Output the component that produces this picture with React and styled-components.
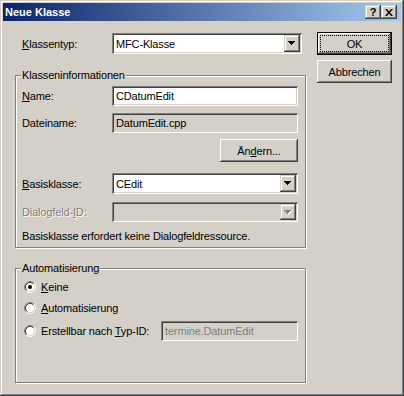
import React from "react";
import styled, { createGlobalStyle } from "styled-components";

const GlobalStyle = createGlobalStyle`
  html, body {
    margin: 0;
    padding: 0;
    background: #d4d0c8;
  }
  body {
    font-family: "Liberation Sans", Arial, sans-serif;
    font-size: 11px;
    letter-spacing: -0.15px;
    color: #000;
  }
`;

const raised =
  "inset -1px -1px 0 #404040, inset 1px 1px 0 #ffffff, inset -2px -2px 0 #808080, inset 2px 2px 0 #d4d0c8";
const sunken =
  "inset 1px 1px 0 #808080, inset -1px -1px 0 #ffffff, inset 2px 2px 0 #404040, inset -2px -2px 0 #d4d0c8";

const DownArrow = ({ disabled }) => (
  <svg width="8" height="5" viewBox="0 0 8 5">
    {disabled && <path d="M1 1h7v1h-1v1h-1v1h-1v1h-1v-1h-1v-1h-1v-1h-1z" fill="#fff" />}
    <path d="M0 0h7v1h-1v1h-1v1h-1v1h-1v-1h-1v-1h-1v-1h-1z" fill={disabled ? "#808080" : "#000"} />
  </svg>
);

const RadioMark = ({ checked }) => (
  <svg width="12" height="12" viewBox="0 0 12 12">
    <circle cx="6" cy="6" r="4.5" fill="#fff" />
    <path d="M2.11 9.89A5.5 5.5 0 0 1 9.89 2.11" fill="none" stroke="#808080" />
    <path d="M9.89 2.11A5.5 5.5 0 0 1 2.11 9.89" fill="none" stroke="#fff" />
    <path d="M2.82 9.18A4.5 4.5 0 0 1 9.18 2.82" fill="none" stroke="#404040" />
    <path d="M9.18 2.82A4.5 4.5 0 0 1 2.82 9.18" fill="none" stroke="#d4d0c8" />
    {checked && <circle cx="6" cy="6" r="2" fill="#000" />}
  </svg>
);

const Combo = ({ width, value, disabled }) => (
  <ComboBox $w={width} $disabled={disabled}>
    <ComboText>{value}</ComboText>
    <DropButton>
      <DownArrow disabled={disabled} />
    </DropButton>
  </ComboBox>
);

const Radio = ({ checked, children }) => (
  <RadioWrap>
    <RadioMark checked={checked} />
    <RadioLabel>{children}</RadioLabel>
  </RadioWrap>
);

const App = () => {
  return (
    <>
      <GlobalStyle />
      <Window>
        <TitleBar>
          <TitleText>Neue Klasse</TitleText>
          <CaptionButtons>
            <CaptionButton>?</CaptionButton>
            <CaptionButton>
              <svg width="8" height="7" viewBox="0 0 8 7">
                <path d="M0 0h2l2 2.5 2-2.5h2l-3 3.5 3 3.5h-2l-2-2.5-2 2.5h-2l3-3.5z" fill="#000" />
              </svg>
            </CaptionButton>
          </CaptionButtons>
        </TitleBar>

        <Body>
          <LeftCol>
            <TopRow>
              <Label>
                <u>K</u>lassentyp:
              </Label>
              <Combo width={190} value="MFC-Klasse" />
            </TopRow>

            <Group $mt={21} $h={173}>
              <Legend>Klasseninformationen</Legend>
              <Row $h={20} $mt={4}>
                <Label>
                  <u>N</u>ame:
                </Label>
                <Edit>CDatumEdit</Edit>
              </Row>
              <Row $h={20} $mt={7}>
                <Label>Dateiname:</Label>
                <Edit $readOnly>DatumEdit.cpp</Edit>
              </Row>
              <Row $h={23} $mt={6}>
                <PushButton $w={78} $push>
                  Än<u>d</u>ern...
                </PushButton>
              </Row>
              <Row $h={21} $mt={11}>
                <Label>
                  <u>B</u>asisklasse:
                </Label>
                <Combo width={186} value="CEdit" />
              </Row>
              <Row $h={20} $mt={8}>
                <Label $disabled>
                  Dialogfeld-<u>I</u>D:
                </Label>
                <Combo width={186} value="" disabled />
              </Row>
              <Row $h={14} $mt={7}>
                <span>Basisklasse erfordert keine Dialogfeldressource.</span>
              </Row>
            </Group>

            <Group $mt={20} $h={115}>
              <Legend>Automatisierung</Legend>
              <Row $h={20} $mt={2}>
                <Radio checked>
                  <u>K</u>eine
                </Radio>
              </Row>
              <Row $h={20} $mt={1}>
                <Radio>
                  <u>A</u>utomatisierung
                </Radio>
              </Row>
              <Row $h={20} $mt={3}>
                <Radio>
                  Erstellbar nach <u>T</u>yp-ID:
                </Radio>
                <Edit $w={137} $disabled $push>
                  termine.DatumEdit
                </Edit>
              </Row>
            </Group>
          </LeftCol>

          <RightCol>
            <DefaultFrame>
              <PushButton $w={73}>
                <FocusRect>OK</FocusRect>
              </PushButton>
            </DefaultFrame>
            <PushButton $w={75}>Abbrechen</PushButton>
          </RightCol>
        </Body>
      </Window>
    </>
  );
};

export default App;

const Window = styled.div`
  width: 404px;
  height: 396px;
  box-sizing: border-box;
  padding: 3px;
  background: #d4d0c8;
  box-shadow: inset -1px -1px 0 #404040, inset 1px 1px 0 #d4d0c8,
    inset -2px -2px 0 #808080, inset 2px 2px 0 #ffffff;
`;

const TitleBar = styled.div`
  height: 18px;
  display: flex;
  align-items: center;
  padding: 0 4px 0 2px;
  background: linear-gradient(to right, #0a246a, #a6caf0);
`;

const TitleText = styled.div`
  flex: 1;
  color: #fff;
  font-weight: bold;
  font-size: 11px;
  letter-spacing: 0;
  white-space: nowrap;
`;

const CaptionButtons = styled.div`
  display: flex;
`;

const CaptionButton = styled.div`
  width: 16px;
  height: 14px;
  box-sizing: border-box;
  display: flex;
  align-items: center;
  justify-content: center;
  background: #d4d0c8;
  box-shadow: inset -1px -1px 0 #404040, inset 1px 1px 0 #d4d0c8,
    inset -2px -2px 0 #808080, inset 2px 2px 0 #ffffff;
  font-weight: bold;
  font-size: 11px;
  line-height: 14px;
`;

const Body = styled.div`
  display: flex;
  align-items: flex-start;
  padding-left: 12px;
`;

const LeftCol = styled.div`
  width: 292px;
  flex-shrink: 0;
  padding-top: 12px;
`;

const RightCol = styled.div`
  margin-left: 10px;
  width: 75px;
  padding-top: 11px;
  display: flex;
  flex-direction: column;
  gap: 5px;
`;

const TopRow = styled.div`
  display: flex;
  align-items: center;
  height: 21px;
  padding-left: 7px;
`;

const Row = styled.div`
  display: flex;
  align-items: center;
  width: 276px;
  height: ${(p) => p.$h}px;
  margin-top: ${(p) => p.$mt}px;
  white-space: nowrap;
`;

const Label = styled.span`
  width: 90px;
  flex-shrink: 0;
  white-space: nowrap;
  color: ${(p) => (p.$disabled ? "#808080" : "#000")};
  text-shadow: ${(p) => (p.$disabled ? "1px 1px 0 #fff" : "none")};
`;

const Group = styled.section`
  margin-top: ${(p) => p.$mt}px;
  padding-left: 6px;
  width: 291px;
  height: ${(p) => p.$h}px;
  min-height: ${(p) => p.$h}px;
  box-sizing: border-box;
  border: 1px solid #808080;
  box-shadow: 1px 1px 0 #ffffff, inset 1px 1px 0 #ffffff;
`;

const Legend = styled.div`
  width: fit-content;
  margin: -7px 0 0 -1px;
  padding: 0 1px;
  line-height: 13px;
  background: #d4d0c8;
  white-space: nowrap;
`;

const ComboBox = styled.div`
  display: flex;
  width: ${(p) => p.$w}px;
  height: 100%;
  box-sizing: border-box;
  padding: 2px;
  background: ${(p) => (p.$disabled ? "#d4d0c8" : "#ffffff")};
  box-shadow: ${sunken};
`;

const ComboText = styled.div`
  flex: 1;
  padding-left: 2px;
  display: flex;
  align-items: center;
  white-space: nowrap;
`;

const DropButton = styled.div`
  width: 16px;
  display: flex;
  align-items: center;
  justify-content: center;
  background: #d4d0c8;
  box-shadow: inset -1px -1px 0 #404040, inset 1px 1px 0 #d4d0c8,
    inset -2px -2px 0 #808080, inset 2px 2px 0 #ffffff;
`;

const Edit = styled.div`
  width: ${(p) => p.$w || 186}px;
  height: 100%;
  box-sizing: border-box;
  padding: 2px 4px;
  margin-left: ${(p) => (p.$push ? "auto" : "0")};
  display: flex;
  align-items: center;
  white-space: nowrap;
  background: ${(p) => (p.$readOnly || p.$disabled ? "#d4d0c8" : "#ffffff")};
  color: ${(p) => (p.$disabled ? "#808080" : "#000")};
  box-shadow: ${sunken};
`;

const PushButton = styled.div`
  width: ${(p) => p.$w}px;
  height: ${(p) => (p.$w === 73 ? 21 : 23)}px;
  margin-left: ${(p) => (p.$push ? "auto" : "0")};
  box-sizing: border-box;
  padding: 3px;
  display: flex;
  align-items: center;
  justify-content: center;
  background: #d4d0c8;
  box-shadow: ${raised};
  white-space: nowrap;
`;

const DefaultFrame = styled.div`
  width: 75px;
  height: 23px;
  box-sizing: border-box;
  border: 1px solid #000;
`;

const FocusRect = styled.div`
  align-self: stretch;
  flex: 1;
  display: flex;
  align-items: center;
  justify-content: center;
  outline: 1px dotted #000;
  outline-offset: 0;
`;

const RadioWrap = styled.div`
  display: flex;
  align-items: center;
  margin-left: 2px;
`;

const RadioLabel = styled.span`
  margin-left: 5px;
`;
